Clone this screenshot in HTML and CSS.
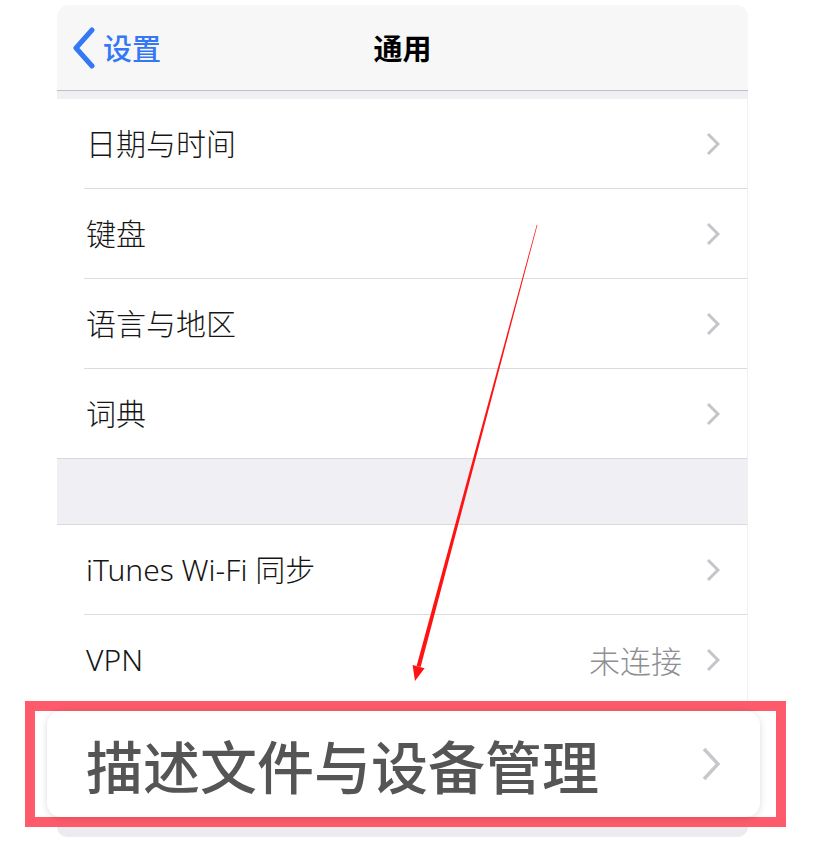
FILE: index.html
```html
<!DOCTYPE html>
<html lang="zh-CN">
<head>
<meta charset="utf-8">
<title>通用</title>
<link rel="stylesheet" href="styles.css">
</head>
<body>
<div class="page">
  <div class="nav">
    <div class="back">
      <svg class="back-icon" width="26" height="42" viewBox="0 0 26 42"><path d="M21 3 L5 21 L21 39" fill="none" stroke="#3478f6" stroke-width="5" stroke-linecap="round" stroke-linejoin="round"/></svg>
      <span class="back-text">设置</span>
    </div>
    <div class="title">通用</div>
  </div>
  <div class="strip"></div>

  <div class="group">
    <div class="row"><div class="row-inner"><span class="label">日期与时间</span><svg class="chev" width="14" height="24" viewBox="0 0 14 24"><path d="M2 2 L12 12 L2 22" fill="none" stroke="#c5c5c9" stroke-width="3"/></svg></div></div>
    <div class="row"><div class="row-inner"><span class="label">键盘</span><svg class="chev" width="14" height="24" viewBox="0 0 14 24"><path d="M2 2 L12 12 L2 22" fill="none" stroke="#c5c5c9" stroke-width="3"/></svg></div></div>
    <div class="row"><div class="row-inner"><span class="label">语言与地区</span><svg class="chev" width="14" height="24" viewBox="0 0 14 24"><path d="M2 2 L12 12 L2 22" fill="none" stroke="#c5c5c9" stroke-width="3"/></svg></div></div>
    <div class="row"><div class="row-inner last"><span class="label">词典</span><svg class="chev" width="14" height="24" viewBox="0 0 14 24"><path d="M2 2 L12 12 L2 22" fill="none" stroke="#c5c5c9" stroke-width="3"/></svg></div></div>
  </div>

  <div class="section-gap"></div>

  <div class="group group-top">
    <div class="row"><div class="row-inner"><span class="label">iTunes Wi-Fi 同步</span><svg class="chev" width="14" height="24" viewBox="0 0 14 24"><path d="M2 2 L12 12 L2 22" fill="none" stroke="#c5c5c9" stroke-width="3"/></svg></div></div>
    <div class="row"><div class="row-inner last"><span class="label">VPN</span><span class="value">未连接</span><svg class="chev" width="14" height="24" viewBox="0 0 14 24"><path d="M2 2 L12 12 L2 22" fill="none" stroke="#c5c5c9" stroke-width="3"/></svg></div></div>
  </div>

  <div class="highlight">
    <div class="card">
      <span class="card-label">描述文件与设备管理</span>
      <svg class="card-chev" width="20" height="34" viewBox="0 0 20 34"><path d="M3 2 L17 17 L3 32" fill="none" stroke="#c8c8cc" stroke-width="3.5"/></svg>
    </div>
  </div>
  <div class="bottom-strip"></div>
</div>

<svg class="arrow" width="825" height="853" viewBox="0 0 825 853">
  <polygon points="537.4,225 420.6,667 416.6,666 536.8,224.8" fill="#ff1212"/>
  <polygon points="415,681 424.6,668.2 412.6,664.9" fill="#ff1212"/>
</svg>
</body>
</html>
```

FILE: styles.css
```css
* { box-sizing: border-box; }

body {
  margin: 0;
  background: #ffffff;
  font-family: "Noto Sans", "Noto Sans CJK SC", sans-serif;
  color: #111111;
}

.page {
  position: relative;
  width: 825px;
  height: 853px;
  padding: 5px 0 0 57px;
}

.nav {
  width: 691px;
  height: 86px;
  background: #f7f7f7;
  border-radius: 12px 12px 0 0;
  border-bottom: 1px solid #bfbfc3;
  display: flex;
  align-items: center;
  position: relative;
}

.back {
  display: flex;
  align-items: center;
  padding-left: 14px;
  gap: 6px;
}

.back-text {
  font-family: "Noto Sans CJK SC", sans-serif;
  font-size: 29px;
  font-weight: 500;
  color: #3478f6;
  line-height: 1;
}

.title {
  position: absolute;
  left: 0;
  right: 0;
  text-align: center;
  font-family: "Noto Sans CJK SC", sans-serif;
  font-size: 29px;
  font-weight: 700;
  color: #000000;
  line-height: 1;
  pointer-events: none;
}

.strip {
  width: 691px;
  height: 8px;
  background: #efeff4;
}

.group {
  width: 691px;
  background: #ffffff;
  border-bottom: 1px solid #d9d9dd;
  border-right: 1px solid #f1f4ee;
}

.group-top {
  border-top: 1px solid #d9d9dd;
}

.row {
  padding-left: 27px;
}

.row-inner {
  height: 90px;
  display: flex;
  align-items: center;
  padding-left: 2px;
  padding-right: 27px;
  border-bottom: 1px solid #dcdce0;
}

.row-inner.last {
  border-bottom: none;
  height: 89px;
}

.label {
  flex: 1;
  font-size: 30px;
  font-weight: 300;
  color: #161616;
  line-height: 1;
}

.value {
  font-family: "Noto Sans CJK SC", sans-serif;
  font-size: 31px;
  font-weight: 300;
  color: #8e8e93;
  margin-right: 24px;
  line-height: 1;
}

.chev {
  display: block;
  flex: none;
}

.section-gap {
  width: 691px;
  height: 65px;
  background: #efeff4;
}

.highlight {
  position: relative;
  z-index: 2;
  margin: -4px 0 0 -32px;
  width: 761px;
  height: 126px;
  border: 10px solid #fd5b6b;
  background: #ffffff;
  padding: 0 16px 0 12px;
}

.card {
  height: 106px;
  background: #ffffff;
  border-radius: 14px;
  box-shadow: 0 1px 7px rgba(0, 0, 0, 0.14);
  display: flex;
  align-items: center;
  padding: 0 39px 0 39px;
}

.card-label {
  flex: 1;
  font-family: "Noto Sans CJK SC", sans-serif;
  font-size: 57px;
  font-weight: 500;
  color: #555555;
  line-height: 1;
}

.card-chev {
  display: block;
  flex: none;
}

.bottom-strip {
  width: 691px;
  height: 10px;
  background: #ececf0;
  border-radius: 0 0 12px 12px;
}

.arrow {
  position: absolute;
  left: 0;
  top: 0;
  z-index: 5;
  pointer-events: none;
}
```
